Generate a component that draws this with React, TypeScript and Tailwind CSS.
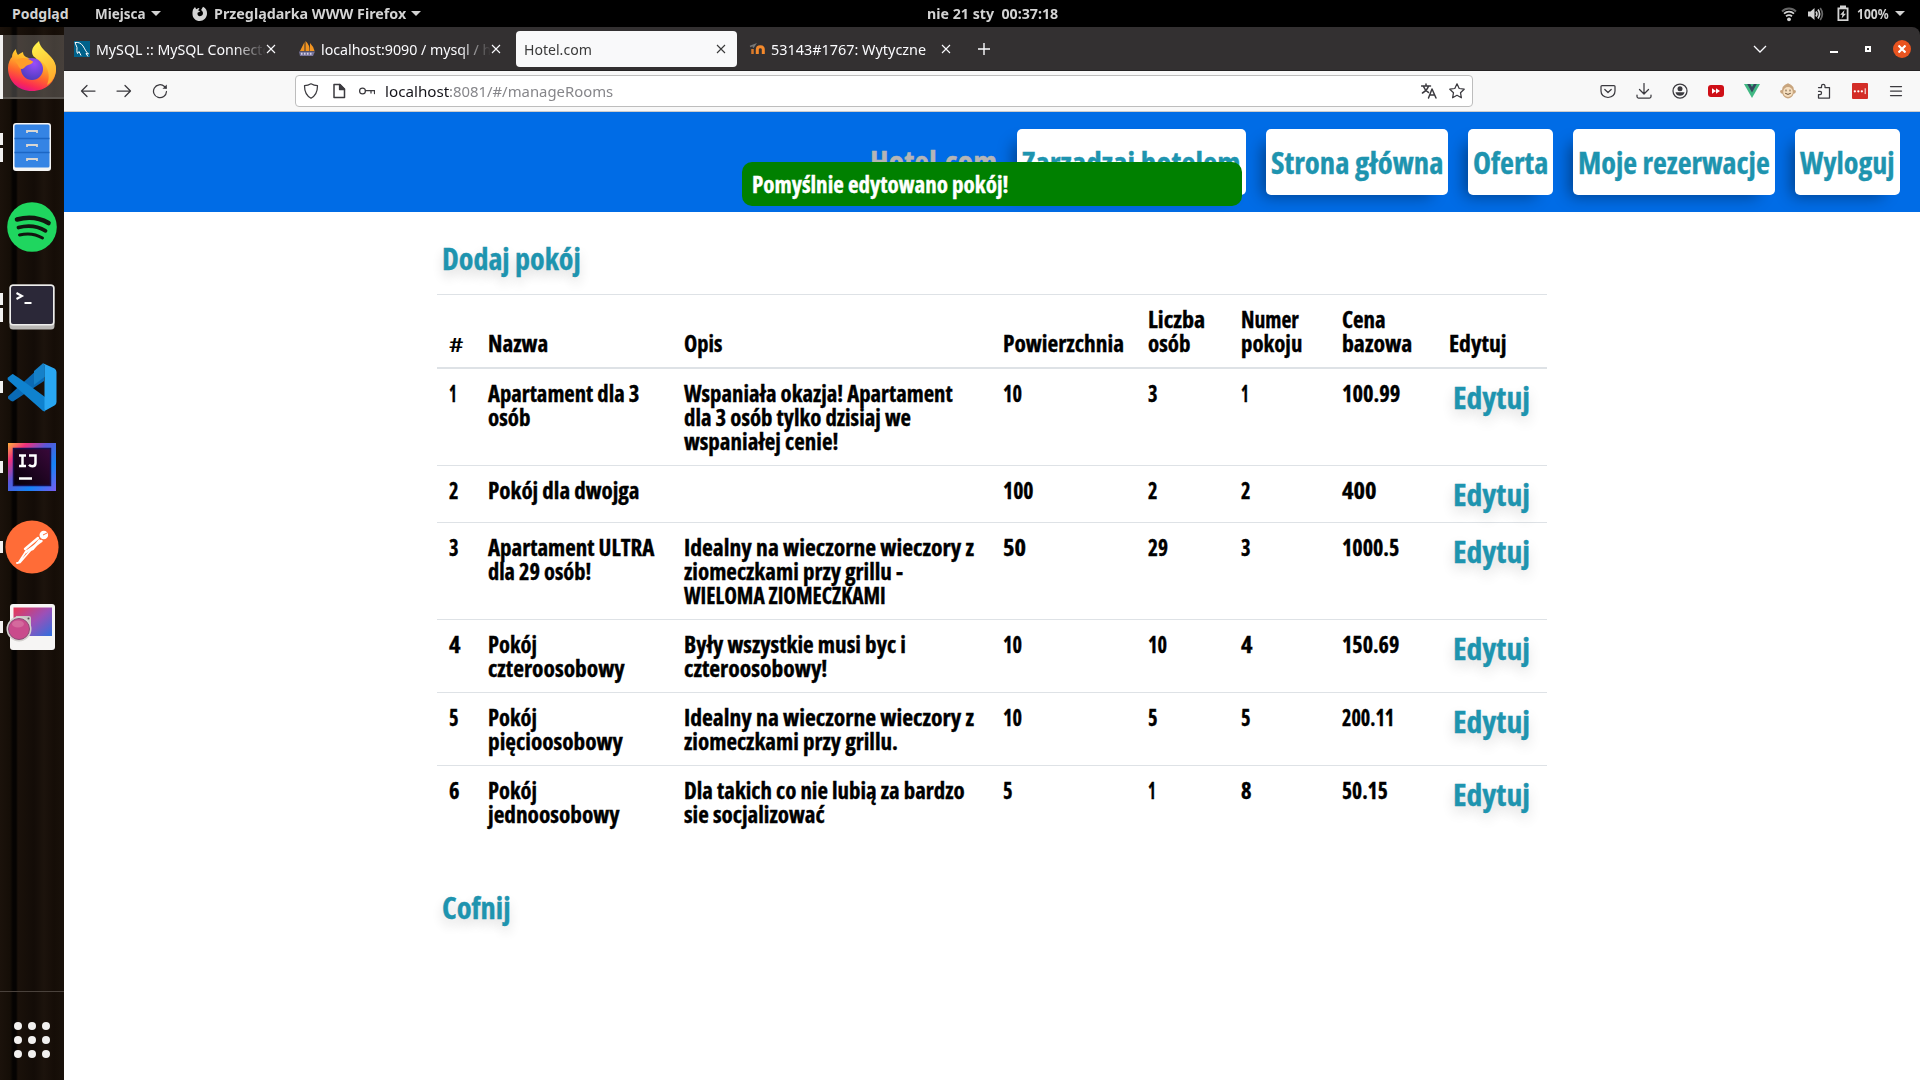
import { useLayoutEffect, useRef, useState } from 'react';
import type { ReactNode } from 'react';

/** One line of text, condensed or widened to take exactly `w` pixels. */
function Fit({ w, children, className = '' }: { w: number; children: string; className?: string }) {
  const ref = useRef<HTMLSpanElement>(null);
  const [scale, setScale] = useState(1);
  useLayoutEffect(() => {
    const el = ref.current;
    if (el && el.offsetWidth) setScale(w / el.offsetWidth);
  }, [w, children]);
  return (
    <span className={`block overflow-visible whitespace-nowrap ${className}`} style={{ width: w }}>
      <span ref={ref} className="inline-block origin-left whitespace-pre" style={{ transform: `scaleX(${scale})` }}>
        {children}
      </span>
    </span>
  );
}

type Line = [string, number];

function Lines({ items }: { items: Line[] }) {
  return (
    <>
      {items.map(([t, w]) => (
        <Fit key={t} w={w} className={t === '#' ? 'pt-[2px] text-[19px] leading-[22px] font-semibold [-webkit-text-stroke:0]' : ''}>{t}</Fit>
      ))}
    </>
  );
}

const headers: { width: string; lines: Line[] }[] = [
  { width: 'w-[39px]', lines: [['#', 14]] },
  { width: 'w-[196px]', lines: [['Nazwa', 60]] },
  { width: 'w-[319px]', lines: [['Opis', 38]] },
  { width: 'w-[145px]', lines: [['Powierzchnia', 121]] },
  { width: 'w-[93px]', lines: [['Liczba', 57], ['osób', 42]] },
  { width: 'w-[101px]', lines: [['Numer', 58], ['pokoju', 61]] },
  { width: 'w-[107px]', lines: [['Cena', 44], ['bazowa', 70]] },
  { width: 'w-[110px]', lines: [['Edytuj', 57]] },
];

const rows: Line[][][] = [
  [
    [['1', 8]],
    [['Apartament dla 3', 151], ['osób', 42]],
    [['Wspaniała okazja! Apartament', 269], ['dla 3 osób tylko dzisiaj we', 227], ['wspaniałej cenie!', 154]],
    [['10', 19]], [['3', 10]], [['1', 8]], [['100.99', 58]],
  ],
  [[['2', 10]], [['Pokój dla dwojga', 151]], [], [['100', 31]], [['2', 10]], [['2', 10]], [['400', 35]]],
  [
    [['3', 10]],
    [['Apartament ULTRA', 166], ['dla 29 osób!', 103]],
    [['Idealny na wieczorne wieczory z', 290], ['ziomeczkami przy grillu -', 219], ['WIELOMA ZIOMECZKAMI', 202]],
    [['50', 23]], [['29', 20]], [['3', 10]], [['1000.5', 57]],
  ],
  [
    [['4', 12]],
    [['Pokój', 49], ['czteroosobowy', 137]],
    [['Były wszystkie musi byc i', 222], ['czteroosobowy!', 143]],
    [['10', 19]], [['10', 19]], [['4', 12]], [['150.69', 57]],
  ],
  [
    [['5', 10]],
    [['Pokój', 49], ['pięcioosobowy', 135]],
    [['Idealny na wieczorne wieczory z', 290], ['ziomeczkami przy grillu.', 214]],
    [['10', 19]], [['5', 10]], [['5', 10]], [['200.11', 52]],
  ],
  [
    [['6', 11]],
    [['Pokój', 49], ['jednoosobowy', 132]],
    [['Dla takich co nie lubią za bardzo', 281], ['sie socjalizować', 141]],
    [['5', 10]], [['1', 8]], [['8', 11]], [['50.15', 46]],
  ],
];

const linkClass =
  'text-[30px] leading-8 text-[#1e94af] [text-shadow:0px_6px_12px_rgba(0,0,0,0.16)]';

function Caret() {
  return <span className="h-0 w-0 border-x-[5px] border-t-[5px] border-x-transparent border-t-[#d3d3d3]" />;
}

function TopBar() {
  return (
    <div className="grid h-[27px] grid-cols-[927px_132px_1fr] items-center bg-black text-[14px] font-bold text-[#d3d3d3]">
      <div className="flex items-center pl-3">
        <Fit w={57}>Podgląd</Fit>
        <Fit w={51} className="ml-[26px]">Miejsca</Fit>
        <span className="ml-[5px] flex"><Caret /></span>
        <svg className="ml-[31px]" width="16" height="16" viewBox="0 0 16 16">
          <path d="M1 3.4 3 1l1.200 2.200C5.600 2.300 6.500 2 7.500 2L6.200 4.500l2.200.7-2.800 1.600c-.6 1.800.6 3.500 2.400 3.500 2.300 0 3.300-1.900 2.900-3.700-.3-1.300-1.200-2-1.800-2.500L11 .8c3 1.500 4.300 4.200 4 7.200-.4 4-3.400 7-7.200 7C3.700 15 .6 12 .5 8.200.4 6.200.6 5 1 3.400Z" fill="#d3d3d3" />
        </svg>
        <Fit w={192} className="ml-[6px]">Przeglądarka WWW Firefox</Fit>
        <span className="ml-[5px] flex"><Caret /></span>
      </div>
      <Fit w={131}>nie 21 sty  00:37:18</Fit>
      <div className="flex items-center justify-end pr-[15px]">
        <svg width="16" height="16" viewBox="0 0 16 16" fill="none" stroke="#d3d3d3" strokeWidth="1.8">
          <path d="M1 5.500c4-4 10-4 14 0" stroke="#666" />
          <path d="M3 7.700c3-2.700 7-2.700 10 0M5 10.200c2-1.500 4-1.500 6 0" />
          <circle cx="8" cy="13.300" r="1.900" fill="#d3d3d3" stroke="none" />
        </svg>
        <svg className="ml-[10px]" width="17" height="16" viewBox="0 0 17 16" fill="none" stroke="#d3d3d3" strokeWidth="1.700">
          <path d="M1 5.500h2.500L7.500 2v12L3.500 10.500H1z" fill="#d3d3d3" stroke="none" />
          <path d="M9 5.500q1.800 2.500 0 5M11 3.500q3.200 4.500 0 9" />
          <path d="M13.200 2q4.300 6 0 12" stroke="#666" />
        </svg>
        <svg className="ml-[12px]" width="14" height="17" viewBox="0 0 14 17">
          <path d="M4 .5h6v2h2.500V16h-11V2.500H4z" fill="#d3d3d3" />
          <path d="M3.300 4.300h7.400v10H3.300z" fill="#000" />
          <path d="M8.500 5 4.200 9.800h2.200L5.600 13.500 10 8.800H7.700z" fill="#d3d3d3" />
        </svg>
        <Fit w={32} className="ml-[7px]">100%</Fit>
        <span className="ml-[6px] flex"><Caret /></span>
      </div>
    </div>
  );
}

function FirefoxIcon() {
  return (
    <svg width="50" height="52" viewBox="0 0 50 52">
      <defs>
        <linearGradient id="ffBody" x1=".75" y1="0" x2=".35" y2="1">
          <stop offset="0" stopColor="#fff13a" />
          <stop offset=".35" stopColor="#ffb52a" />
          <stop offset=".62" stopColor="#ff6a2c" />
          <stop offset=".85" stopColor="#fb2b53" />
          <stop offset="1" stopColor="#e0128a" />
        </linearGradient>
        <linearGradient id="ffFlame" x1=".4" y1="0" x2=".7" y2="1">
          <stop offset="0" stopColor="#fff04a" />
          <stop offset="1" stopColor="#ffa42a" />
        </linearGradient>
        <radialGradient id="ffGlobe" cx=".6" cy=".25" r=".8">
          <stop offset="0" stopColor="#9a4dfa" />
          <stop offset="1" stopColor="#4a3bbd" />
        </radialGradient>
      </defs>
      <path d="M1 28c0-5 2-9 4-11 0-3 1-5 4-8 0 2 .5 4 2 6 1-1 3-2 5-3 0 2 1 4 3 5l8 3 10-7c8 3 12 9 12 16 0 13-10 22-24 22S1 41 1 28Z" fill="url(#ffBody)" />
      <path d="M32 1c1 7 7 10 11 15 3 4 6 8 6 14-1 7-4 12-9 15 3-7 2-15-2-20-4-6-13-6-13-13 0-5 4-8 7-11Z" fill="url(#ffFlame)" />
      <circle cx="25" cy="29" r="11" fill="url(#ffGlobe)" />
      <path d="M8 21c5-4 11-4 17 0 2 0 1 3-4 4-3 1-4 4-6 4-3 0-4-5-7-8Z" fill="#ff9d2a" />
    </svg>
  );
}

function FilesIcon() {
  return (
    <svg width="40" height="50" viewBox="0 0 40 50">
      <rect x="1" y="1" width="38" height="48" rx="3" fill="#f4f4f4" />
      <rect x="2.500" y="2.500" width="35" height="43" rx="1.500" fill="#3584e4" />
      <path d="M2.500 16.500h35M2.500 30.500h35" stroke="#1c66c4" strokeWidth="1.300" />
      {[8, 22, 36].map((y) => (
        <path key={y} d={`M15 ${y + 3}V${y + 1}h10v2`} stroke="#d9d7d3" strokeWidth="1.800" fill="none" />
      ))}
    </svg>
  );
}

function SpotifyIcon() {
  return (
    <svg width="50" height="50" viewBox="0 0 50 50">
      <circle cx="25" cy="25" r="24.800" fill="#1fd65f" />
      <g fill="none" stroke="#12160f" strokeLinecap="round">
        <path d="M10 17.500c11-3 22-2 31.500 3.500" strokeWidth="4.600" />
        <path d="M11.500 25.500c9-2.500 19-1.500 27 3.300" strokeWidth="3.800" />
        <path d="M12.500 33c8-2 16-1.200 23 3" strokeWidth="3" />
      </g>
    </svg>
  );
}

function TerminalIcon() {
  return (
    <svg width="46" height="46" viewBox="0 0 46 46">
      <rect x=".5" y=".5" width="45" height="45" rx="3.500" fill="#b9b7b4" />
      <rect x=".5" y=".5" width="45" height="41" rx="3.500" fill="#eeeeec" />
      <rect x="2" y="2" width="42" height="38" rx="2" fill="#2b2838" />
      <path d="m7.500 9 5.500 3-5.500 3M15.500 19h7" stroke="#fff" strokeWidth="2" fill="none" />
    </svg>
  );
}

function CodeIcon() {
  return (
    <svg width="50" height="50" viewBox="0 0 50 50">
      <path d="M1 34.500 33 5l4 8v6L6 39.500q-2 0-5-3z" fill="#0a6ab5" />
      <path d="M1 15.500 5.500 12Q7 12 38 35v14.500L36 49 1 18q-1-1 0-2.500z" fill="#0f82cf" />
      <path d="M35.500 1 47.500 6.500Q49.500 7.500 49.500 10v30q0 2.500-2 3.500L37.500 49q1-1 0-2V4q0-2-2-3Z" fill="#29a7f2" />
      <path d="M27 9 36 1.200q1.800 1 1.800 3.500v10L27 23z" fill="#1581c9" />
    </svg>
  );
}

function IdeaIcon() {
  return (
    <svg width="48" height="48" viewBox="0 0 48 48">
      <defs>
        <linearGradient id="ijEdge" x1="0" y1="0" x2="1" y2="1">
          <stop offset="0" stopColor="#ffb13b" />
          <stop offset=".2" stopColor="#f0317d" />
          <stop offset=".42" stopColor="#5a57d8" />
          <stop offset=".7" stopColor="#1583f5" />
          <stop offset="1" stopColor="#7a5cf0" />
        </linearGradient>
        <linearGradient id="ijIn" x1="0" y1="1" x2="1" y2="0">
          <stop offset="0" stopColor="#050008" />
          <stop offset="1" stopColor="#39083a" />
        </linearGradient>
      </defs>
      <rect width="48" height="48" fill="url(#ijEdge)" />
      <rect x="5.500" y="5.500" width="37" height="37" fill="url(#ijIn)" stroke="#15104f" strokeWidth="1.500" />
      <path d="M11 12.500h7M14.500 12v12M11 23h7M21 12.500h6.500V20q0 3.300-3.200 3.300-2 0-3.300-1.500M11 35.500h13" stroke="#fff" strokeWidth="2.500" fill="none" />
    </svg>
  );
}

function PostmanIcon() {
  return (
    <svg width="54" height="54" viewBox="0 0 54 54">
      <circle cx="27" cy="27" r="26.600" fill="#ff6c37" />
      <circle cx="38.800" cy="15" r="4.300" fill="#fff" />
      <path d="m38 15 4-2" stroke="#ff6c37" strokeWidth="1" />
      <path d="M33 18 20 29M36.500 21 21 32" stroke="#fff" strokeWidth="2.400" strokeLinecap="round" />
      <path d="m34 19 2.500 1.500-8 9.500-5 2z" fill="#fff" />
      <path d="M21.500 30.500 14 42M25 31 15 42.500l-3 .5" stroke="#fff" strokeWidth="1.800" fill="none" strokeLinecap="round" />
    </svg>
  );
}

function ScreenshotIcon() {
  return (
    <svg width="50" height="48" viewBox="0 0 50 48" className="-translate-x-px">
      <defs>
        <linearGradient id="shot" x1="0" y1=".1" x2="1" y2="1">
          <stop offset="0" stopColor="#e2395c" />
          <stop offset=".5" stopColor="#9b50b8" />
          <stop offset="1" stopColor="#2e70de" />
        </linearGradient>
      </defs>
      <rect x="4" y="1" width="45" height="46" rx="3" fill="#f6f5f4" />
      <rect x="7.500" y="4.500" width="38.500" height="28.500" fill="url(#shot)" />
      <path d="M10 13h13q2 0 2 2v13H5z" fill="#c8c6c3" />
      <circle cx="13" cy="26" r="12.500" fill="#d3d1ce" />
      <circle cx="13" cy="26" r="10.500" fill="#c94b8c" stroke="#8d4c76" strokeWidth="1" />
      <ellipse cx="12" cy="21" rx="6" ry="3.500" fill="#dc7fa9" opacity=".6" />
      <circle cx="22.500" cy="15.500" r="1" fill="#555" />
    </svg>
  );
}

const dock: { icon: ReactNode; marks: 0 | 1 | 2 | 3 }[] = [
  { icon: <FirefoxIcon />, marks: 3 },
  { icon: <FilesIcon />, marks: 2 },
  { icon: <SpotifyIcon />, marks: 0 },
  { icon: <TerminalIcon />, marks: 2 },
  { icon: <CodeIcon />, marks: 1 },
  { icon: <IdeaIcon />, marks: 1 },
  { icon: <PostmanIcon />, marks: 1 },
  { icon: <ScreenshotIcon />, marks: 1 },
];

function Dock() {
  return (
    <aside className="flex w-16 shrink-0 flex-col bg-[#1a110a] bg-[linear-gradient(90deg,#1b120b_0,#150e07_10px,#050302_13px,#050302_16px,#1a110a_18px,#130c07_34px,#1c130c_44px,#150d07_54px,#19110a_64px)]">
      {dock.map(({ icon, marks }, i) => (
        <div key={i} className="flex h-20 items-center">
          <div className={`flex h-16 w-16 items-center ${marks === 3 ? 'border-b-2 border-[#5a5550] bg-white/20' : ''}`}>
            <div className={`flex w-[3px] shrink-0 flex-col justify-center gap-[3px] ${marks === 3 ? 'h-16 self-start bg-[#f2f1f0]' : ''}`}>
              {(marks === 1 || marks === 2) && <span className="h-3 bg-[#f2f1f0]" />}
              {marks === 2 && <span className="h-[14px] bg-[#f2f1f0]" />}
            </div>
            <div className="flex w-[58px] justify-center">{icon}</div>
          </div>
        </div>
      ))}
      <div className="mt-auto flex h-[89px] items-center justify-center border-t border-[#4a423c] pb-2 pt-[15px]">
        <div className="grid grid-cols-3 gap-[6px]">
          {Array.from({ length: 9 }, (_, i) => (
            <span key={i} className="h-2 w-2 rounded-full bg-[#f2f1f0]" />
          ))}
        </div>
      </div>
    </aside>
  );
}

function Cross({ color }: { color: string }) {
  return (
    <svg width="10" height="10" viewBox="0 0 10 10" stroke={color} strokeWidth="1.100">
      <path d="m1 1 8 8M9 1 1 9" />
    </svg>
  );
}

function Tab({ icon, title, w, active = false, fade = false }: { icon?: ReactNode; title: string; w: number; active?: boolean; fade?: boolean }) {
  return (
    <div className={`mr-1 flex h-9 w-[221px] items-center rounded pl-2 ${active ? 'bg-[#f9f9fa] text-[#3a3a3a]' : 'text-[#fbfbfe]'}`}>
      {icon && <span className="mr-[6px] w-4 shrink-0">{icon}</span>}
      <div className={`w-[170px] grow overflow-hidden ${fade ? '[mask-image:linear-gradient(90deg,black_calc(100%-32px),transparent)]' : ''}`}>
        <Fit w={w}>{title}</Fit>
      </div>
      <span className={`mr-[11px] shrink-0 ${fade ? 'ml-0' : 'ml-1'}`}>
        <Cross color={active ? '#3a3a3a' : '#fbfbfe'} />
      </span>
    </div>
  );
}

function MysqlIcon() {
  return (
    <svg width="16" height="16" viewBox="0 0 16 16">
      <rect width="16" height="16" fill="#00618a" />
      <path d="M1 1.500c3-.5 6 .5 8 3.500 2 3 2.500 5.500 5.500 8L12 12.500l2 3M1 1.500c1 2 1 3 2 5 0 2-.5 4 .5 6l1.500-2 2 4" stroke="#fff" strokeWidth="1" fill="none" />
    </svg>
  );
}

function PmaIcon() {
  return (
    <svg width="16" height="16" viewBox="0 0 16 16">
      <path d="M5.500 1v9H1zM6.500 0q4.500 4 4 10h-4zM11 2q4 4 4.500 8H11z" fill="#f29420" />
      <path d="M0 10.500h16l-2 4.500H1z" fill="#77739b" />
      <path d="M2 12.800h12" stroke="#d5d3e5" strokeWidth="2" strokeDasharray="1.500 1.500" />
    </svg>
  );
}

function MoodleIcon() {
  return (
    <svg width="16" height="16" viewBox="0 0 16 16" fill="none">
      <path d="M1 5.500 6 3.500l-2 3" stroke="#777" strokeWidth="1.500" />
      <path d="M3.500 13V8" stroke="#d8792b" strokeWidth="2.500" />
      <path d="M8.300 13V8.500q0-2.800 3-2.800t3 2.800V13" stroke="#f5892b" strokeWidth="3" />
    </svg>
  );
}

function TabBar() {
  return (
    <div className="flex h-11 items-center rounded-tr-lg border-b border-[#242223] bg-[#333031] pl-[2px] text-[14.500px] leading-6">
      <Tab icon={<MysqlIcon />} title="MySQL :: MySQL Connector" w={181} fade />
      <Tab icon={<PmaIcon />} title="localhost:9090 / mysql / hotel" w={196} fade />
      <Tab title="Hotel.com" w={68} active />
      <Tab icon={<MoodleIcon />} title="53143#1767: Wytyczne" w={155} />
      <svg className="ml-[11px]" width="14" height="14" viewBox="0 0 14 14" stroke="#fbfbfe" strokeWidth="1.400">
        <path d="M7 1v12M1 7h12" />
      </svg>
      <div className="ml-auto flex items-center pr-[9px]">
        <svg width="14" height="8" viewBox="0 0 14 8" fill="none" stroke="#fbfbfe" strokeWidth="1.300">
          <path d="m1 1 6 6 6-6" />
        </svg>
        <span className="ml-[63px] mt-[6px] h-[2px] w-2 bg-white" />
        <span className="ml-[27px] h-[6px] w-[6px] border-2 border-white" />
        <span className="ml-[22px] flex h-[18px] w-[18px] items-center justify-center rounded-full bg-[#e95420]">
          <svg width="8" height="8" viewBox="0 0 8 8" stroke="#fff" strokeWidth="2.200"><path d="m.5.5 7 7M7.500.5l-7 7" /></svg>
        </span>
      </div>
    </div>
  );
}

function Glyph({ children, w = 'w-9' }: { children: ReactNode; w?: string }) {
  return (
    <span className={`flex shrink-0 justify-center ${w}`}>
      <svg width="16" height="16" viewBox="0 0 16 16" fill="none" stroke="#3b3a3f" strokeWidth="1.250" strokeLinecap="round" strokeLinejoin="round">
        {children}
      </svg>
    </span>
  );
}

function Toolbar() {
  return (
    <div className="flex h-[41px] items-center border-b border-[#ccc] bg-[#f8f8f8]">
      <div className="flex w-[231px] pl-[6px]">
        <Glyph><path d="M15 8H1.500M7 2.500 1.500 8 7 13.500" /></Glyph>
        <Glyph><path d="M1 8h13.500M9 2.500 14.500 8 9 13.500" /></Glyph>
        <Glyph><path d="M14.500 8.500A6.500 6.500 0 1 1 12.500 3.500L14 5" /><path d="M14.800 1.500v4.300h-4.300z" fill="#3b3a3f" stroke="none" /></Glyph>
      </div>
      <div className="flex h-8 w-[1178px] items-center rounded border border-[#bdbdbd] bg-white pl-[1px] text-[14.500px] leading-6">
        <Glyph w="w-7"><path d="M8 .8q3 1.700 6.500 1.900 0 9-6.500 12.500Q1.500 11.700 1.500 2.700 5 2.500 8 .8Z" /></Glyph>
        <Glyph w="w-7"><path d="M3 1.500h6L13.500 6v8.500H3z" strokeWidth="1.500" /><path d="M8.500 1.500v5h5z" fill="#3b3a3f" /></Glyph>
        <Glyph w="w-7"><circle cx="3.500" cy="8" r="2.900" /><path d="M6.500 7.500h9v3M12 7.500v2.500" /></Glyph>
        <Fit w={64} className="ml-[4px] text-[#15141a]">localhost</Fit>
        <Fit w={164} className="text-[#86868a]">:8081/#/manageRooms</Fit>
        <div className="ml-auto flex pr-[1px]">
          <Glyph w="w-7"><path d="M.5 3h9M5 1v2M7.500 3q-1 4-6 7M2.500 3.500q1.500 4 5 6M7.500 15l3.500-9 4 9M8.700 12h5" strokeWidth="1.500" /></Glyph>
          <Glyph w="w-7"><path d="m8 .8 2.200 4.700 5 .7-3.700 3.500.9 5.100L8 12.300l-4.400 2.500.9-5.100L.8 6.200l5-.7z" /></Glyph>
        </div>
      </div>
      <div className="ml-auto flex pr-[6px]">
        <Glyph><path d="M2 2.500h12q1 0 1 1V8q0 5.500-7 6.500Q1 13.500 1 8V3.500q0-1 1-1Z" /><path d="m4.800 6.500 3.200 3 3.200-3" /></Glyph>
        <Glyph><path d="M8 .5v10M3.500 6.500 8 11l4.500-4.500M1 12v1.500q0 1.500 1.500 1.500h11q1.500 0 1.500-1.500V12" /></Glyph>
        <Glyph><circle cx="8" cy="8" r="7" /><circle cx="8" cy="5.800" r="2.500" fill="#3b3a3f" stroke="none" /><path d="M3.500 9.300h9q-.7 3.500-4.500 3.500t-4.500-3.500z" fill="#3b3a3f" stroke="none" /></Glyph>
        <Glyph><rect x="0" y="2" width="16" height="12" rx="3" fill="#cf0f17" stroke="none" /><path d="m4 5.300 4 2.700-4 2.700zM8 5.300 12 8l-4 2.700z" fill="#fff" stroke="none" /></Glyph>
        <Glyph><path d="M0 1h16L8 15z" fill="#41b883" stroke="none" /><path d="M3.200 1h3L8 4l1.800-3h3L8 9.500z" fill="#34495e" stroke="none" /></Glyph>
        <Glyph><path d="m8 .3 3 1.500q2.700 1.500 3 5.200 2.300 0 1.800 2-.4 1.500-2.200 1.700-1.500 4.300-5.600 4.800-4.100-.5-5.600-4.800Q.6 10.500.2 9q-.5-2 1.800-2 .3-3.700 3-5.200z" fill="#c8a57e" stroke="none" /><ellipse cx="8" cy="9" rx="4.800" ry="5" fill="#f6dfc0" stroke="none" /><path d="M6 7v1M10 7v1M5.500 10.500q2.500 2 5 0" stroke="#6b5238" strokeWidth="1" /></Glyph>
        <Glyph><path d="M2.500 4.500h3V3q0-1.700 1.700-1.700T9 3v1.500h4.500V15h-11v-3.500H4q1.500 0 1.500-1.600T4 8.300H2.500" /></Glyph>
        <Glyph><rect width="16" height="16" rx="1" fill="#d32d27" stroke="none" /><path d="M2.800 8.300h.1M6.300 8.300h.1M9.800 8.300h.1" stroke="#fff" strokeWidth="2.200" /><path d="M13.200 5.700v5" stroke="#fff" strokeWidth="1" /></Glyph>
        <Glyph><path d="M2.500 3.500h11M2.500 8h11M2.500 12.500h11" /></Glyph>
      </div>
    </div>
  );
}

const nav: { text: string; w: number }[] = [
  { text: 'Zarządzaj hotelem', w: 219 },
  { text: 'Strona główna', w: 172 },
  { text: 'Oferta', w: 75 },
  { text: 'Moje rezerwacje', w: 192 },
  { text: 'Wyloguj', w: 95 },
];

function HotelPage() {
  return (
    <main className="relative flex grow flex-col bg-white font-['Open_Sans','Noto_Sans',sans-serif] text-[22.400px] font-bold leading-6 text-black [-webkit-text-stroke:0.35px] [font-stretch:75%] [&_span>span]:translate-y-px">
      <header className="flex h-[100px] items-center justify-end gap-5 bg-[#006ce6] pr-5">
        <Fit w={127} className="pb-0.5 text-[30px] leading-8 text-[#b5b5b5]">Hotel.com</Fit>
        {nav.map(({ text, w }) => (
          <a key={text} className="flex h-[66px] items-center rounded-[5px] bg-white px-[5px] text-[30px] leading-8 text-[#1e94af] shadow-[-10px_8px_15px_-7px_rgba(0,0,0,0.42)]">
            <Fit w={w}>{text}</Fit>
          </a>
        ))}
      </header>
      <div className="absolute left-1/2 top-[50px] flex h-11 w-[500px] -translate-x-1/2 items-center rounded-[10px] bg-[#008000] px-[10px] text-white">
        <Fit w={256}>Pomyślnie edytowano pokój!</Fit>
      </div>
      <section className="mx-auto w-[1110px]">
        <div className="flex h-[82px] items-start pl-[5px] pt-[30px]">
          <Fit w={139} className={linkClass}>Dodaj pokój</Fit>
        </div>
        <table className="w-full table-fixed border-separate border-spacing-0 text-left">
          <thead>
            <tr>
              {headers.map(({ width, lines }) => (
                <th key={lines[0][0]} className={`${width} border-b-2 border-t border-[#dee2e6] px-3 pb-3 pt-3 align-bottom`}>
                  <Lines items={lines} />
                </th>
              ))}
            </tr>
          </thead>
          <tbody>
            {rows.map((cells, r) => (
              <tr key={r}>
                {cells.map((lines, c) => (
                  <td key={c} className={`px-3 pb-3 align-top ${r === 0 ? 'pt-3' : 'border-t border-[#dee2e6] pt-3'}`}>
                    <Lines items={lines} />
                  </td>
                ))}
                <td className={`pb-3 pl-4 pt-3 align-top ${r === 0 ? '' : 'border-t border-[#dee2e6]'}`}>
                  <Fit w={77} className={linkClass}>Edytuj</Fit>
                </td>
              </tr>
            ))}
          </tbody>
        </table>
        <div className="flex pl-[5px] pt-[53px]">
          <Fit w={69} className={linkClass}>Cofnij</Fit>
        </div>
      </section>
    </main>
  );
}

export default function App() {
  return (
    <div className="flex h-[1080px] w-[1920px] flex-col overflow-hidden bg-black font-['Noto_Sans',sans-serif]">
      <TopBar />
      <div className="flex grow">
        <Dock />
        <div className="flex grow flex-col">
          <TabBar />
          <Toolbar />
          <HotelPage />
        </div>
      </div>
    </div>
  );
}
